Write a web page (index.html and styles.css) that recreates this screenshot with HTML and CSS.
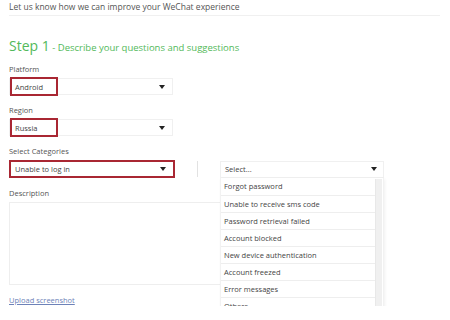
FILE: index.html
```html
<!DOCTYPE html>
<html lang="en">
<head>
<meta charset="UTF-8" />
<title>WeChat Feedback</title>
<link rel="stylesheet" href="styles.css">
</head>
<body>

<div class="intro">Let us know how we can improve your WeChat experience</div>

<h2 class="step"><span class="step-num">Step 1</span> - Describe your questions and suggestions</h2>

<div class="field">
  <label>Platform</label>
  <div class="select">
    <span class="value marked">Android</span>
    <span class="arrow"></span>
  </div>
</div>

<div class="field">
  <label>Region</label>
  <div class="select">
    <span class="value marked">Russia</span>
    <span class="arrow"></span>
  </div>
</div>

<div class="field">
  <label>Select Categories</label>
  <div class="cat-row">
    <div class="select marked-box">
      <span class="value">Unable to log in</span>
      <span class="arrow"></span>
    </div>
    <div class="sep"></div>
    <div class="sub">
      <div class="select wide">
        <span class="value">Select...</span>
        <span class="arrow"></span>
      </div>
      <div class="dropdown">
        <ul>
          <li>Forgot password</li>
          <li>Unable to receive sms code</li>
          <li>Password retrieval failed</li>
          <li>Account blocked</li>
          <li>New device authentication</li>
          <li>Account freezed</li>
          <li>Error messages</li>
          <li>Others</li>
        </ul>
        <div class="scroll"></div>
      </div>
    </div>
  </div>
</div>

<div class="field">
  <label>Description</label>
  <div class="textarea"></div>
</div>

<a class="upload" href="#">Upload screenshot</a>

</body>
</html>
```

FILE: styles.css
```css
body {
  margin: 0; padding: 0 9px; background: #fff; color: #555;
  font-family: "Open Sans", "Noto Sans", sans-serif; font-size: 8px;
}
.intro {
  font-size: 8.5px; line-height: 14px; color: #555;
  padding-bottom: 1px; border-bottom: 1px solid #f0f0f0; margin-right: 1px;
}
.step {
  margin: 20px 0 7px; height: 20px; font-weight: normal; font-size: 9.5px; line-height: 20px; color: #52b95a;
}
.step-num {
  font-size: 14px;
}
.field {
  margin-bottom: 9px;
}
.field label {
  display: block; font-size: 7.5px; line-height: 12px; margin-bottom: 3px; color: #555;
}
.select {
  width: 164px; height: 17px; border: 1px solid #f0f0f0; box-sizing: border-box;
  display: flex; align-items: center; justify-content: space-between;
  font-size: 7.5px; color: #444; padding: 0 7px 0 0;
}
.select .value {
  padding-left: 4px;
}
.select .value.marked {
  box-sizing: border-box; width: 48px; height: 19px;
  border: 2px solid #a92733; display: flex; align-items: center; padding-left: 3px;
}
.marked-box {
  border: 2px solid #a92733; height: 18px; width: 166px;
}
.arrow {
  width: 0; height: 0; border-left: 3px solid transparent; border-right: 3px solid transparent;
  border-top: 4px solid #222;
}
.cat-row {
  display: flex; align-items: center;
}
.sep {
  width: 1px; height: 16px; background: #e2e2e2; margin: 0 22px;
}
.sub {
  position: relative;
}
.select.wide {
  width: 164px; padding-right: 6px;
}
.dropdown {
  position: absolute; top: 17px; left: 0; width: 164px; height: 136px;
  background: #fff; display: flex; box-shadow: 1px 1px 3px rgba(0,0,0,0.06);
  border: 1px solid #f2f2f2; border-top: none; box-sizing: border-box;
}
.dropdown ul {
  list-style: none; margin: 0; padding: 0; flex: 1;
}
.dropdown li {
  height: 17px; line-height: 16px; font-size: 7.5px; color: #444; padding-left: 3px;
  border-top: 1px solid #eee; box-sizing: border-box;
}
.dropdown li:first-child {
  border-top: none;
}
.scroll {
  width: 6px; margin: 1px 1px 1px 0; background: #f0f0f0; border-left: 1px solid #e8e8e8;
}
.textarea {
  width: 372px; height: 83px; border: 1px solid #eee; box-sizing: border-box;
}
.upload {
  display: block; width: max-content; margin-top: 5px; font-size: 7.5px; line-height: 12px; color: #6d82b8;
}
```
